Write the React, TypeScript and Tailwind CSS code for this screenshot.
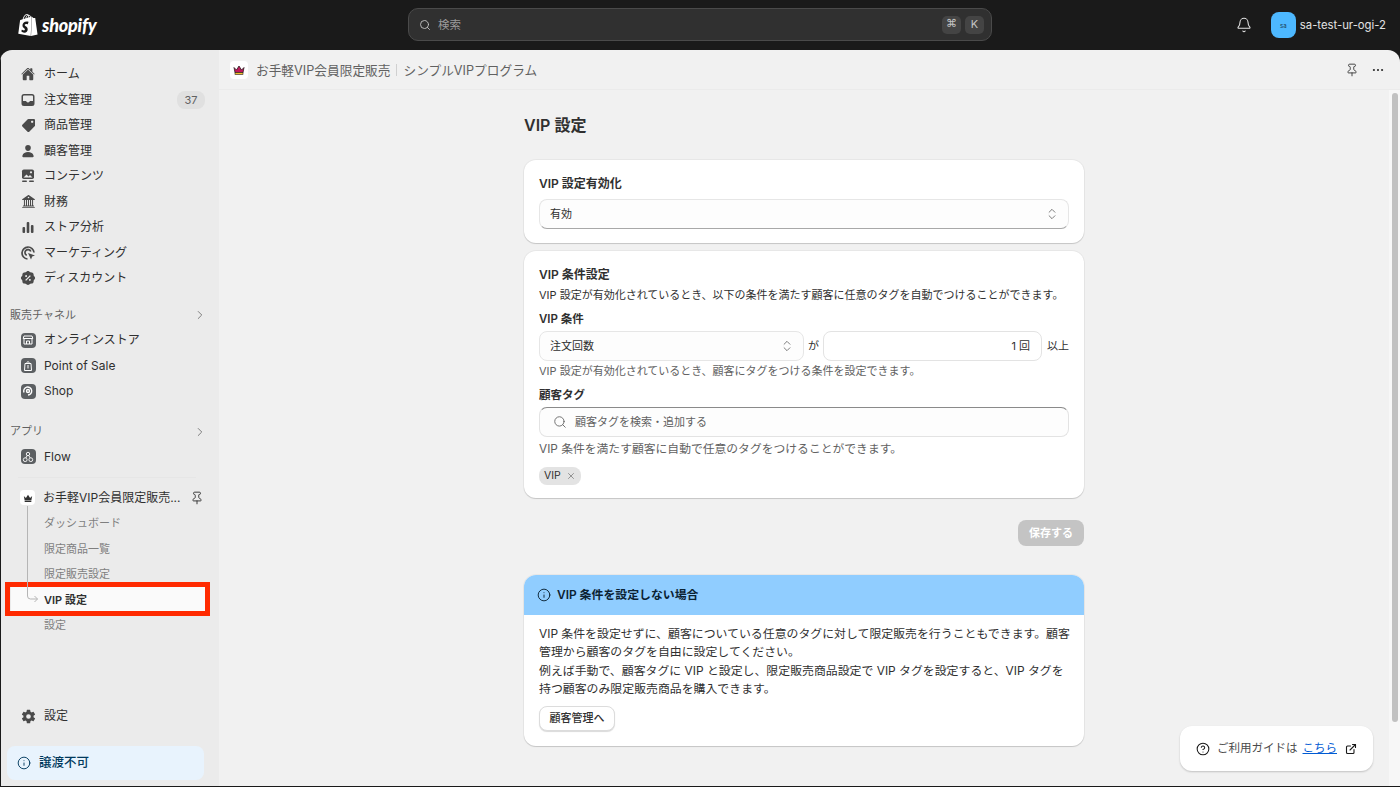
import type { ReactNode } from 'react'
import {
  Search, Bell, Pin, Ellipsis, ChevronRight, ChevronsUpDown, Info, X, CircleHelp, ExternalLink,
} from 'lucide-react'
import { SiShopify } from 'react-icons/si'
import { IoHome, IoPerson, IoSettingsSharp } from 'react-icons/io5'
import { FaTag } from 'react-icons/fa'
import { BsBank2 } from 'react-icons/bs'
import { RiDiscountPercentFill } from 'react-icons/ri'

const fontStack = 'font-[Inter,"Noto_Sans_CJK_JP",sans-serif]'

function InboxIcon() {
  return (
    <svg viewBox="0 0 16 16" className="w-4 h-4" fill="#4a4a4a">
      <path d="M4 2h8a2.5 2.5 0 0 1 2.5 2.5v7A2.5 2.5 0 0 1 12 14H4a2.5 2.5 0 0 1-2.5-2.5v-7A2.5 2.5 0 0 1 4 2Zm-1 6.5v.5h2.6c.5 0 .8.3 1 .7.2.5.7.8 1.4.8s1.200-.3 1.400-.8c.2-.4.500-.7 1-.7H13V4.500A1 1 0 0 0 12 3.500H4a1 1 0 0 0-1 1Z" />
    </svg>
  )
}

function ContentIcon() {
  return (
    <svg viewBox="0 0 16 16" className="w-4 h-4" fill="#4a4a4a">
      <rect x="2" y="1.500" width="12" height="9.500" rx="1.800" />
      <path d="M3.500 9.500 6.500 6.500l2 2 1.500-1.500 2.500 2.500Z" fill="#ebebeb" />
      <circle cx="11" cy="4.300" r="1.100" fill="#ebebeb" />
      <rect x="2" y="12.500" width="5" height="1.600" rx="0.800" />
      <rect x="9" y="12.500" width="5" height="1.600" rx="0.800" />
    </svg>
  )
}

function BarsIcon() {
  return (
    <svg viewBox="0 0 16 16" className="w-4 h-4" fill="#4a4a4a">
      <rect x="2.500" y="8" width="2.600" height="6" rx="1" />
      <rect x="6.700" y="3" width="2.600" height="11" rx="1" />
      <rect x="10.900" y="6" width="2.600" height="8" rx="1" />
    </svg>
  )
}

function TargetIcon() {
  return (
    <svg viewBox="0 0 16 16" className="w-4 h-4" fill="none" stroke="#4a4a4a" strokeWidth="1.700">
      <path d="M7.500 14A6 6 0 1 1 14 7.500" />
      <path d="M6.800 10.300A3 3 0 1 1 10.800 6.500" />
      <path d="m8 8 7 2.500-2.800 1-1.200 3Z" fill="#4a4a4a" stroke="none" />
    </svg>
  )
}

function AppTile({ children }: { children: ReactNode }) {
  return (
    <span className="w-[15px] h-[15px] rounded-[4px] bg-[#5c5f62] flex items-center justify-center text-white">
      {children}
    </span>
  )
}

function StoreGlyph() {
  return (
    <svg viewBox="0 0 12 12" className="w-3 h-3" fill="none" stroke="white" strokeWidth="1">
      <path d="M2 2h8l.8 2.500H1.200Z" />
      <path d="M2 4.500V10h8V4.500M4.500 10V7h3v3" />
    </svg>
  )
}

function PosGlyph() {
  return (
    <svg viewBox="0 0 12 12" className="w-3 h-3" fill="none" stroke="white" strokeWidth="1">
      <path d="M3 3.500h6l.5 7h-7Z" />
      <path d="M4.800 3.500C4.800 1 7.200 1 7.200 3.500M6 5v3.500" />
    </svg>
  )
}

function ShopGlyph() {
  return (
    <svg viewBox="0 0 12 12" className="w-3 h-3" fill="none" stroke="white" strokeWidth="1.400">
      <path d="M2 7.500A4 4 0 1 1 6 10" />
      <circle cx="6" cy="6" r="1.500" />
    </svg>
  )
}

function FlowGlyph() {
  return (
    <svg viewBox="0 0 12 12" className="w-3 h-3" fill="none" stroke="white" strokeWidth="0.900">
      <circle cx="6" cy="3" r="1.700" />
      <circle cx="3.200" cy="8.700" r="1.900" />
      <circle cx="8.800" cy="8.700" r="1.900" />
      <path d="M5.200 4.500 3.800 7M6.800 4.500 8.200 7" />
    </svg>
  )
}

function Crown({ small }: { small?: boolean }) {
  if (small) {
    return (
      <svg viewBox="0 0 12 12" className="w-[10px] h-[10px]" fill="#303030">
        <path d="M1 3.500 3.500 6 6 2l2.500 4L11 3.500 10 9H2Z" />
        <rect x="2" y="9.500" width="8" height="1.300" />
      </svg>
    )
  }
  return (
    <svg viewBox="0 0 12 12" className="w-3 h-3">
      <path d="M1 3.500 3.500 6 6 2l2.500 4L11 3.500 10 8.500H2Z" fill="#c2185b" stroke="#2b1a20" strokeWidth="0.800" />
      <rect x="2" y="8.500" width="8" height="2" fill="#f2c230" stroke="#2b1a20" strokeWidth="0.600" />
    </svg>
  )
}

function NavRow({ icon, label, badge }: { icon: ReactNode; label: string; badge?: string }) {
  return (
    <div className="h-[25.500px] flex items-center pl-[19px] pr-[14px] gap-2 text-[12px] text-[#303030]">
      <span className="w-4 h-4 flex items-center justify-center text-[#4a4a4a] shrink-0">{icon}</span>
      <span className="flex-1">{label}</span>
      {badge && (
        <span className="w-7 h-[18px] rounded-lg bg-[#e0e0e0] text-[11px] text-[#616161] flex items-center justify-center">
          {badge}
        </span>
      )}
    </div>
  )
}

function SectionHead({ label }: { label: string }) {
  return (
    <div className="h-[25px] flex items-center justify-between pl-[9px] pr-[12px] text-[11px] text-[#616161]">
      <span>{label}</span>
      <ChevronRight size={14} strokeWidth={1.500} className="text-[#6f6f6f]" />
    </div>
  )
}

function SubRow({ label }: { label: string }) {
  return <div className="h-[25.500px] flex items-center pl-[43px] text-[11px] text-[#7f7f7f]">{label}</div>
}

function Sidebar() {
  return (
    <aside className="w-[219px] shrink-0 bg-[#ebebeb] border-l border-[#1a1a1a] flex flex-col pt-[11.500px] relative">
      <NavRow icon={<IoHome size={14} />} label="ホーム" />
      <NavRow icon={<InboxIcon />} label="注文管理" badge="37" />
      <NavRow icon={<FaTag size={13} className="-scale-x-100" />} label="商品管理" />
      <NavRow icon={<IoPerson size={14} />} label="顧客管理" />
      <NavRow icon={<ContentIcon />} label="コンテンツ" />
      <NavRow icon={<BsBank2 size={13} />} label="財務" />
      <NavRow icon={<BarsIcon />} label="ストア分析" />
      <NavRow icon={<TargetIcon />} label="マーケティング" />
      <NavRow icon={<RiDiscountPercentFill size={16} />} label="ディスカウント" />

      <div className="mt-[11.500px]"><SectionHead label="販売チャネル" /></div>
      <NavRow icon={<AppTile><StoreGlyph /></AppTile>} label="オンラインストア" />
      <NavRow icon={<AppTile><PosGlyph /></AppTile>} label="Point of Sale" />
      <NavRow icon={<AppTile><ShopGlyph /></AppTile>} label="Shop" />

      <div className="mt-[15px]"><SectionHead label="アプリ" /></div>
      <NavRow icon={<AppTile><FlowGlyph /></AppTile>} label="Flow" />

      <div className="mt-[7px] ml-[17px] mr-[23px] border-t border-[#e6e6e6]" />

      <div className="relative mt-[7.500px]">
        <div className="h-[25.500px] flex items-center pl-[19px] pr-[15px] gap-2 text-[12px] text-[#303030]">
          <span className="w-[15px] h-[15px] rounded-[4px] bg-white flex items-center justify-center shrink-0">
            <Crown small />
          </span>
          <span className="flex-1 truncate">お手軽VIP会員限定販売...</span>
          <Pin size={14} strokeWidth={1.600} className="text-[#303030] shrink-0" />
        </div>
        <SubRow label="ダッシュボード" />
        <SubRow label="限定商品一覧" />
        <SubRow label="限定販売設定" />
        <div className="relative h-[25.500px] ml-[10px] mr-[13px] bg-[#fafafa] flex items-center pl-[33px] text-[11px] font-semibold text-[#303030]">
          VIP 設定
          <div className="absolute -left-[6px] -right-[4px] -top-[5px] -bottom-[3.500px] border-[5.500px] border-[#ff2a00]" />
        </div>
        <SubRow label="設定" />
        <svg className="absolute left-[26px] top-[21px] w-[12px] h-[98px]" viewBox="0 0 12 98" fill="none" stroke="#b5b5b5" strokeWidth="1">
          <path d="M.5 0v90q0 3 3 3h7M7.500 90l3 3-3 3" />
        </svg>
      </div>

      <div className="mt-auto">
        <NavRow icon={<IoSettingsSharp size={15} />} label="設定" />
        <div className="h-[34px] ml-[6px] mr-[15px] mt-[17px] mb-[6px] rounded-lg bg-[#e8f3fd] flex items-center gap-[8px] px-[10px] text-[12.500px] font-medium text-[#00395c]">
          <Info size={14} strokeWidth={1.600} />
          譲渡不可
        </div>
      </div>
    </aside>
  )
}

function Topbar() {
  return (
    <header className="h-[50px] shrink-0 grid grid-cols-[1fr_584px_1fr] items-center bg-[#1a1a1a]">
      <div className="flex items-center gap-[3px] pl-[17px] text-white">
        <SiShopify size={22} />
        <span className="font-['Lato',sans-serif] font-black italic text-[18px] leading-none tracking-[-0.200px]">shopify</span>
      </div>
      <div className="h-[33px] -mt-px rounded-[10px] bg-[#303030] border border-[#4a4a4a] flex items-center pl-[10px] pr-[7px] text-[11.500px] text-[#9a9a9a]">
        <Search size={12} strokeWidth={1.800} className="text-[#c4c4c4]" />
        <span className="ml-[7px] flex-1 pt-[2px]">検索</span>
        <span className="w-[19px] h-[18px] rounded-[5px] bg-[#444] text-[#c4c4c4] text-[11px] flex items-center justify-center font-['DejaVu_Sans',sans-serif]">⌘</span>
        <span className="w-[19px] h-[18px] ml-[4px] rounded-[5px] bg-[#444] text-[#c4c4c4] text-[11px] flex items-center justify-center">K</span>
      </div>
      <div className="flex items-center justify-end pr-[14px] text-[#e3e3e3]">
        <Bell size={16} strokeWidth={1.600} />
        <span className="ml-[19px] w-[25px] h-[26px] rounded-lg bg-[#4db8ff] flex items-center justify-center text-[6px] text-[#1a3a50]">sa</span>
        <span className="ml-[4px] text-[11.300px]">sa-test-ur-ogi-2</span>
      </div>
    </header>
  )
}

function SelectBox({ value, className }: { value: string; className: string }) {
  return (
    <div className={`h-[30px] rounded-lg bg-[#fdfdfd] border border-[#e6e6e6] flex items-center justify-between pl-[10px] pr-[9px] text-[11px] text-[#303030] ${className}`}>
      <span>{value}</span>
      <ChevronsUpDown size={14} strokeWidth={1.400} className="text-[#616161]" />
    </div>
  )
}

function Card({ children, className = '' }: { children: ReactNode; className?: string }) {
  return (
    <section className={`bg-white rounded-xl shadow-[0_1px_1px_rgba(0,0,0,0.15),0_0_0_1px_rgba(0,0,0,0.04)] ${className}`}>
      {children}
    </section>
  )
}

function MainPanel() {
  return (
    <main className="flex-1 min-w-0 flex flex-col bg-[#f1f1f1] relative">
      <div className="h-10 shrink-0 flex items-center pl-[11px] pr-[15px] text-[12.700px] text-[#616161] border-b border-[#ebebeb]">
        <span className="w-[18px] h-[18px] rounded-[4px] bg-white flex items-center justify-center">
          <Crown />
        </span>
        <span className="ml-2 pt-[3px]">お手軽VIP会員限定販売</span>
        <span className="mx-[6px] h-3 border-l border-[#d0d0d0]" />
        <span className="pt-[3px]">シンプルVIPプログラム</span>
        <Pin size={14} strokeWidth={1.500} className="ml-auto text-[#303030]" />
        <Ellipsis size={14} strokeWidth={1.800} className="ml-[12px] text-[#303030]" />
      </div>

      <div className="flex-1 min-h-0 flex">
        <div className="flex-1 min-w-0">
          <div className="w-[560px] mx-auto pt-[24px]">
            <h1 className="text-[16px] leading-[22px] font-semibold text-[#303030]">VIP 設定</h1>

            <Card className="mt-[24px] h-[83px] px-[15px] pt-[16px]">
              <h2 className="text-[12px] leading-4 font-semibold text-[#303030]">VIP 設定有効化</h2>
              <SelectBox value="有効" className="mt-[7px] border-b-[#a8a8a8]" />
            </Card>

            <Card className="mt-2 h-[247px] px-[15px] pt-[16px]">
              <h2 className="text-[12px] leading-4 font-semibold text-[#303030]">VIP 条件設定</h2>
              <p className="text-[11px] leading-4 text-[#303030] mt-[4px]">
                VIP 設定が有効化されているとき、以下の条件を満たす顧客に任意のタグを自動でつけることができます。
              </p>
              <h3 className="text-[11.500px] leading-4 font-semibold text-[#303030] mt-[8px]">VIP 条件</h3>
              <div className="flex items-center mt-[4px] text-[11px] text-[#303030]">
                <SelectBox value="注文回数" className="w-[265px]" />
                <span className="w-[19px] text-center">が</span>
                <div className="flex-1 h-[30px] rounded-lg bg-white border border-[#e3e3e3] flex items-center justify-end pr-[11px]">
                  1 回
                </div>
                <span className="ml-[5px]">以上</span>
              </div>
              <p className="text-[11px] leading-4 text-[#616161] mt-[2px]">
                VIP 設定が有効化されているとき、顧客にタグをつける条件を設定できます。
              </p>
              <h3 className="text-[11.500px] leading-4 font-semibold text-[#303030] mt-[8px]">顧客タグ</h3>
              <div className="h-[30px] mt-[4px] rounded-lg bg-[#fdfdfd] border border-[#e3e3e3] border-t-[#8a8a8a] flex items-center pl-[13px] text-[11px] text-[#616161]">
                <Search size={14} strokeWidth={1.500} className="text-[#616161]" />
                <span className="ml-[8px]">顧客タグを検索・追加する</span>
              </div>
              <p className="text-[11.800px] leading-4 text-[#616161] mt-[4px]">
                VIP 条件を満たす顧客に自動で任意のタグをつけることができます。
              </p>
              <span className="mt-[10px] h-[18px] w-[42px] rounded-lg bg-[#e3e3e3] flex items-center pl-[5px] gap-[5px] text-[10.500px] text-[#303030]">
                VIP
                <X size={10} strokeWidth={1.500} className="text-[#616161]" />
              </span>
            </Card>

            <div className="flex justify-end mt-[22px]">
              <button className="w-[66px] h-[26px] rounded-lg bg-[#c4c4c4] text-white text-[11px] font-semibold">保存する</button>
            </div>

            <Card className="mt-[29px] h-[171px] overflow-hidden">
              <div className="h-10 bg-[#90cdff] flex items-center gap-[6px] px-[13px] text-[11.900px] font-semibold text-[#0b2233]">
                <Info size={14} strokeWidth={1.600} />
                VIP 条件を設定しない場合
              </div>
              <div className="pl-[15px] pr-[14px] pt-[10px]">
                <p className="text-[11.900px] leading-[18.300px] text-[#303030]">
                  VIP 条件を設定せずに、顧客についている任意のタグに対して限定販売を行うこともできます。顧客管理から顧客のタグを自由に設定してください。
                  <br />
                  例えば手動で、顧客タグに VIP と設定し、限定販売商品設定で VIP タグを設定すると、VIP タグを持つ顧客のみ限定販売商品を購入できます。
                </p>
                <button className="mt-[8px] block w-[76px] h-[25px] rounded-lg bg-white border border-[#dcdcdc] shadow-[0_1px_1px_rgba(0,0,0,0.15)] text-[11px] font-medium text-[#303030]">
                  顧客管理へ
                </button>
              </div>
            </Card>
          </div>
        </div>

        <div className="w-[11px] shrink-0 bg-[#f7f7f7] pt-[3px] flex justify-center">
          <div className="w-[6px] h-[629px] rounded-full bg-[#c1c1c1]" />
        </div>
      </div>

      <div className="absolute right-[27px] bottom-[15px] w-[193px] h-[45px] rounded-xl bg-white shadow-[0_1px_2px_rgba(0,0,0,0.2)] flex items-center pl-[16px] text-[11.500px] text-[#4a4a4a]">
        <CircleHelp size={14} strokeWidth={1.800} className="text-[#1a1a1a]" />
        <span className="ml-[7px]">ご利用ガイドは</span>
        <span className="ml-[5px] text-[#005bd3] underline">こちら</span>
        <ExternalLink size={12} strokeWidth={2.200} className="ml-[8px] text-[#1a1a1a]" />
      </div>
    </main>
  )
}

export default function App() {
  return (
    <div className={`h-screen w-full flex flex-col overflow-hidden bg-[#1a1a1a] ${fontStack}`}>
      <Topbar />
      <div className="flex-1 min-h-0 flex mb-px rounded-t-xl overflow-hidden">
        <Sidebar />
        <MainPanel />
      </div>
    </div>
  )
}
